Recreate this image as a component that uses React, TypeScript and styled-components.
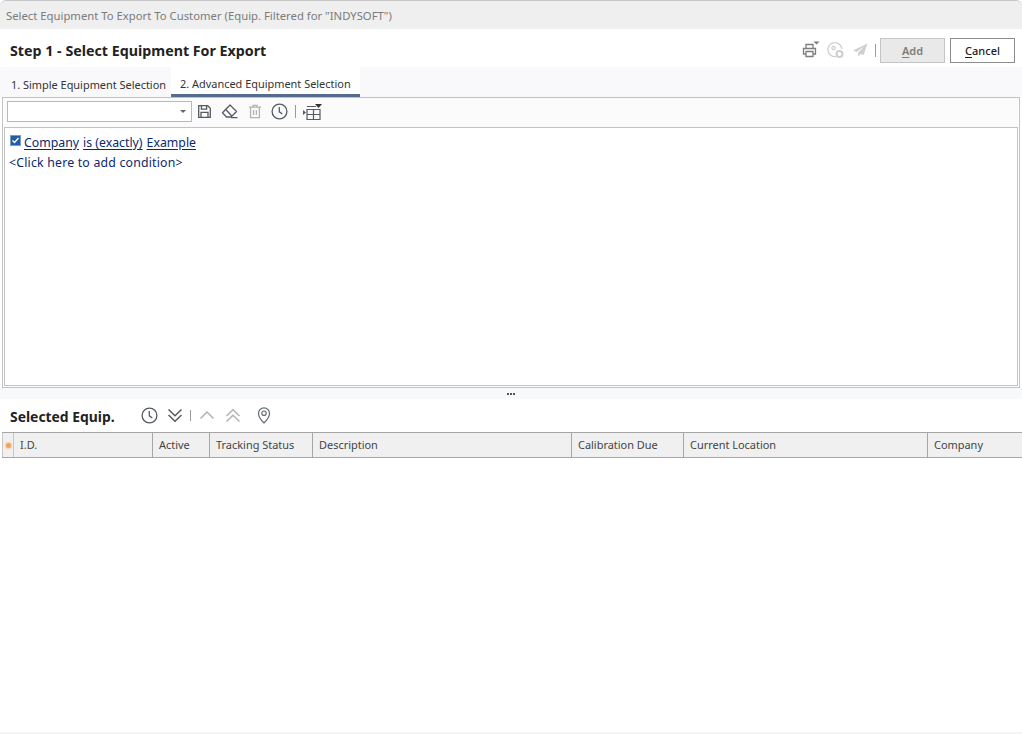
import React from 'react';
import styled, { createGlobalStyle } from 'styled-components';

const GlobalStyle = createGlobalStyle`
  html, body {
    margin: 0;
    padding: 0;
    background: #fff;
  }
  body {
    font-family: "Noto Sans", "Open Sans", sans-serif;
    overflow: hidden;
  }
`;

const Win = styled.div`
  width: 1022px;
  height: 734px;
  box-sizing: border-box;
  display: flex;
  flex-direction: column;
  background: #fff;
  overflow: hidden;
  border-bottom: 2px solid #f4f4f4;
`;

const TitleBar = styled.div`
  height: 29px;
  flex: none;
  box-sizing: border-box;
  padding: 0 0 0 6px;
  display: flex;
  align-items: center;
  background: #efefef;
  border-top: 1px solid #c8c8c8;
  border-radius: 6px 6px 0 0;
  color: #7b7b7b;
  font-size: 11.3px;
  white-space: nowrap;
`;

const StepHeader = styled.div`
  height: 38px;
  flex: none;
  box-sizing: border-box;
  display: flex;
  align-items: center;
  justify-content: space-between;
  padding: 4px 7px 0 10px;
`;

const Heading = styled.div`
  font-size: 14.25px;
  font-weight: 700;
  color: #222;
  white-space: nowrap;
`;

const Actions = styled.div`
  display: flex;
  align-items: center;
`;

const IconSlot = styled.span<{ $w?: number }>`
  width: ${p => p.$w ?? 25}px;
  height: 24px;
  display: flex;
  align-items: center;
  justify-content: center;
  flex: none;
`;

const Sep = styled.span<{ $h?: number; $mx?: number }>`
  width: 1px;
  height: ${p => p.$h ?? 13}px;
  margin: 0 ${p => p.$mx ?? 0}px;
  background: #9a9a9a;
  flex: none;
`;

const Btn = styled.div<{ $disabled?: boolean }>`
  width: 65px;
  height: 25px;
  box-sizing: border-box;
  display: flex;
  align-items: center;
  justify-content: center;
  font-size: 11px;
  margin-left: ${p => (p.$disabled ? '1px' : '5px')};
  border: 1px solid ${p => (p.$disabled ? '#c4c4c4' : '#8c8c8c')};
  background: ${p => (p.$disabled ? '#e9e9e9' : '#fff')};
  color: ${p => (p.$disabled ? '#7d7d7d' : '#1c1c1c')};
  font-weight: ${p => (p.$disabled ? 600 : 500)};
  u {
    text-underline-offset: 2px;
  }
`;

const TabStrip = styled.div`
  height: 30px;
  flex: none;
  box-sizing: border-box;
  display: flex;
  align-items: flex-end;
  padding-left: 3px;
  background: #f9f9fb;
`;

const Tab = styled.div<{ $active?: boolean }>`
  height: 30px;
  box-sizing: border-box;
  padding: ${p => (p.$active ? '6px 9px 0' : '4px 5px 0 8px')};
  display: flex;
  align-items: center;
  font-size: 10.93px;
  color: #333;
  white-space: nowrap;
  background: ${p => (p.$active ? '#fff' : 'transparent')};
  border-bottom: ${p => (p.$active ? '3px solid #566b90' : 'none')};
`;

const FilterPanel = styled.div`
  height: 291px;
  flex: none;
  margin: 0 2px;
  padding: 0 1px 1px;
  box-sizing: border-box;
  border: 1px solid #c2c2c2;
  display: flex;
  flex-direction: column;
  background: #fff;
`;

const FilterBar = styled.div`
  height: 29px;
  flex: none;
  box-sizing: border-box;
  display: flex;
  align-items: center;
  padding: 0 0 2px 3px;
  background: #fbfbfb;
`;

const Combo = styled.div`
  width: 185px;
  height: 21px;
  box-sizing: border-box;
  flex: none;
  border: 1px solid #b9b9b9;
  background: #fff;
  display: flex;
  align-items: center;
  justify-content: flex-end;
  padding-right: 5px;
  &::after {
    content: '';
    border-left: 3px solid transparent;
    border-right: 3px solid transparent;
    border-top: 3px solid #666;
  }
`;

const Editor = styled.div`
  flex: 1;
  box-sizing: border-box;
  border: 1px solid #c2c2c2;
  padding: 4px 4px;
  font-size: 12.3px;
  color: #0b2a6b;
`;

const CondRow = styled.div<{ $spaced?: boolean }>`
  height: 20px;
  display: flex;
  align-items: center;
  gap: 4px;
  white-space: nowrap;
  letter-spacing: ${p => (p.$spaced ? '0.2px' : '0')};
  u {
    text-underline-offset: 2px;
  }
`;

const Check = styled.span`
  width: 11px;
  height: 11px;
  flex: none;
  margin: -3px -1px 0 1px;
  background: #1c5fa8;
  border: 1px solid #7b9cc4;
  box-sizing: border-box;
  display: flex;
  align-items: center;
  justify-content: center;
`;

const Splitter = styled.div`
  height: 11px;
  flex: none;
  background: #f8f9fb;
  display: flex;
  justify-content: center;
  align-items: center;
  gap: 1px;
`;

const Dot = styled.span`
  width: 2px;
  height: 2px;
  background: #555;
`;

const SectionBar = styled.div`
  height: 33px;
  flex: none;
  box-sizing: border-box;
  display: flex;
  align-items: center;
  padding-left: 10px;
`;

const SectionTitle = styled(Heading)`
  width: 127px;
  font-size: 13.9px;
  padding-top: 1px;
`;

const SectionIcons = styled.div`
  display: flex;
  align-items: center;
  margin-bottom: 1px;
`;

const GridHead = styled.div`
  height: 26px;
  flex: none;
  margin-left: 2px;
  box-sizing: border-box;
  display: flex;
  background: #f0f0f0;
  border-top: 1px solid #a6a6a6;
  border-bottom: 1px solid #a6a6a6;
`;

const Marker = styled.div`
  width: 12px;
  flex: none;
  box-sizing: border-box;
  display: flex;
  align-items: center;
  justify-content: center;
  border-left: 1px solid #c8c8c8;
  border-right: 1px solid #c8c8c8;
  &::after {
    content: '';
    width: 5px;
    height: 5px;
    border-radius: 50%;
    background: #f2a45a;
    box-shadow: 0 0 1px 1px #f9d0a6;
  }
`;

const Col = styled.div<{ $w: number }>`
  width: ${p => p.$w}px;
  flex: none;
  box-sizing: border-box;
  padding: 0 0 2px 6px;
  display: flex;
  align-items: center;
  border-right: 1px solid #a6a6a6;
  font-size: 10.95px;
  color: #444;
  white-space: nowrap;
  &:last-child {
    border-right: none;
  }
`;

const GridBody = styled.div`
  flex: 1;
  background: #fff;
`;

type IconProps = { color?: string };

const Printer = ({ color = '#7d7d7d' }: IconProps) => (
  <svg width="20" height="20" viewBox="0 0 20 20" fill="none" stroke={color} strokeWidth="1.3">
    <path d="M6 8V4.500h7V8M6 14H3.500V8.500h12V14H13" />
    <path d="M6 11.500h7v5H6z" />
    <path d="M13.500 1.500h6l-3 3z" fill="#777" stroke="none" />
  </svg>
);

const Globe = ({ color = '#cfcfcf' }: IconProps) => (
  <svg width="18" height="18" viewBox="0 0 18 18" fill="none" stroke={color} strokeWidth="1.3">
    <path d="M10 15.600A7 7 0 1 1 15.900 8" />
    <circle cx="7.500" cy="7" r="1.600" />
    <circle cx="13.500" cy="13" r="3" strokeWidth="2" />
  </svg>
);

const Send = ({ color = '#cfcfcf' }: IconProps) => (
  <svg width="16" height="16" viewBox="0 0 16 16" fill={color}>
    <path d="M15.500 1.500 1 8.500l3.600 1.600L12 4.500 6 11v3.500l2.600-2.600 3 1.200z" />
  </svg>
);

const Save = ({ color = '#555b66' }: IconProps) => (
  <svg width="15" height="15" viewBox="0 0 15 15" fill="none" stroke={color} strokeWidth="1.3">
    <path d="M1.700 1.700h9l2.600 2.600v9H1.700z" />
    <path d="M4.400 1.900v3.200h5.200V1.900M4 13V8.300h7V13" />
  </svg>
);

const Eraser = ({ color = '#555b66' }: IconProps) => (
  <svg width="17" height="15" viewBox="0 0 17 15" fill="none" stroke={color} strokeWidth="1.3">
    <path d="M9 1 15.500 7.500 10 13H5.500L1.500 8.800z" strokeLinejoin="round" />
    <path d="M4.800 5.500 11 12.200M10 13.700h6.500" />
  </svg>
);

const Trash = ({ color = '#b3b3b3' }: IconProps) => (
  <svg width="14" height="15" viewBox="0 0 14 15" fill="none" stroke={color} strokeWidth="1.3">
    <path d="M1 3.200h12M5 3V1.400h4V3M2.600 3.400v10.200h8.800V3.400M5.600 6v5M8.400 6v5" />
  </svg>
);

const Clock = ({ color = '#555b66' }: IconProps) => (
  <svg width="17" height="17" viewBox="0 0 17 17" fill="none" stroke={color} strokeWidth="1.3">
    <circle cx="8.500" cy="8.500" r="7.400" />
    <path d="M8.300 4v4.800l3 2.200" />
  </svg>
);

const GridPick = () => (
  <svg width="20" height="18" viewBox="0 0 20 18" fill="none" stroke="#555b66" strokeWidth="1.2">
    <path d="M5 6.500h13v10H5zM5 11.500h13M11.500 6.500v10M5 3.500h9" />
    <path d="M1 7l3 2.500-3 2.500z" fill="#555b66" stroke="none" />
    <path d="M13 1h7l-3.500 4z" fill="#333" stroke="none" />
  </svg>
);

const Chevrons = ({ color = '#555b66', up }: IconProps & { up?: boolean }) => (
  <svg width="16" height="15" viewBox="0 0 16 15" fill="none" stroke={color} strokeWidth="1.500">
    {up ? (
      <path d="M1.500 8 8 1.800 14.500 8M1.500 13.500 8 7.200l6.500 6.300" />
    ) : (
      <path d="M1.500 1.500 8 7.800l6.500-6.300M1.500 7 8 13.200 14.500 7" />
    )}
  </svg>
);

const ChevronUp = ({ color = '#b3b3b3' }: IconProps) => (
  <svg width="16" height="10" viewBox="0 0 16 10" fill="none" stroke={color} strokeWidth="1.500">
    <path d="M1.500 8.500 8 2l6.500 6.500" />
  </svg>
);

const Pin = ({ color = '#666c76' }: IconProps) => (
  <svg width="14" height="17" viewBox="0 0 14 17" fill="none" stroke={color} strokeWidth="1.200">
    <path d="M7 16S1.500 10.400 1.500 6.400a5.500 5.500 0 0 1 11 0C12.500 10.400 7 16 7 16z" />
    <circle cx="7" cy="6.200" r="2.200" />
  </svg>
);

const columns: [string, number][] = [
  ['I.D.', 139],
  ['Active', 57],
  ['Tracking Status', 103],
  ['Description', 259],
  ['Calibration Due', 112],
  ['Current Location', 244],
  ['Company', 94],
];

export default function App() {
  return (
    <Win>
      <GlobalStyle />
      <TitleBar>Select Equipment To Export To Customer (Equip. Filtered for "INDYSOFT")</TitleBar>

      <StepHeader>
        <Heading>Step 1 - Select Equipment For Export</Heading>
        <Actions>
          <IconSlot><Printer /></IconSlot>
          <IconSlot><Globe /></IconSlot>
          <IconSlot><Send /></IconSlot>
          <Sep $mx={3} />
          <Btn $disabled><span><u>A</u>dd</span></Btn>
          <Btn><span><u>C</u>ancel</span></Btn>
        </Actions>
      </StepHeader>

      <TabStrip>
        <Tab>1. Simple Equipment Selection</Tab>
        <Tab $active>2. Advanced Equipment Selection</Tab>
      </TabStrip>

      <FilterPanel>
        <FilterBar>
          <Combo />
          <IconSlot><Save /></IconSlot>
          <IconSlot><Eraser /></IconSlot>
          <IconSlot><Trash /></IconSlot>
          <IconSlot><Clock /></IconSlot>
          <Sep $mx={3} />
          <IconSlot><GridPick /></IconSlot>
        </FilterBar>
        <Editor>
          <CondRow>
            <Check>
              <svg width="9" height="9" viewBox="0 0 9 9" fill="none" stroke="#fff" strokeWidth="1.3">
                <path d="m1.500 4.500 2 2 4-4.500" />
              </svg>
            </Check>
            <u>Company</u>
            <u>is (exactly)</u>
            <u>Example</u>
          </CondRow>
          <CondRow $spaced>&lt;Click here to add condition&gt;</CondRow>
        </Editor>
      </FilterPanel>

      <Splitter>
        <Dot />
        <Dot />
        <Dot />
      </Splitter>

      <SectionBar>
        <SectionTitle>Selected Equip.</SectionTitle>
        <SectionIcons>
          <IconSlot><Clock /></IconSlot>
          <IconSlot><Chevrons /></IconSlot>
          <Sep $h={11} $mx={3} />
          <IconSlot $w={26}><ChevronUp /></IconSlot>
          <IconSlot><Chevrons color="#b3b3b3" up /></IconSlot>
          <IconSlot $w={37}><Pin /></IconSlot>
        </SectionIcons>
      </SectionBar>

      <GridHead>
        <Marker />
        {columns.map(([label, w]) => (
          <Col key={label} $w={w}>{label}</Col>
        ))}
      </GridHead>
      <GridBody />
    </Win>
  );
}
